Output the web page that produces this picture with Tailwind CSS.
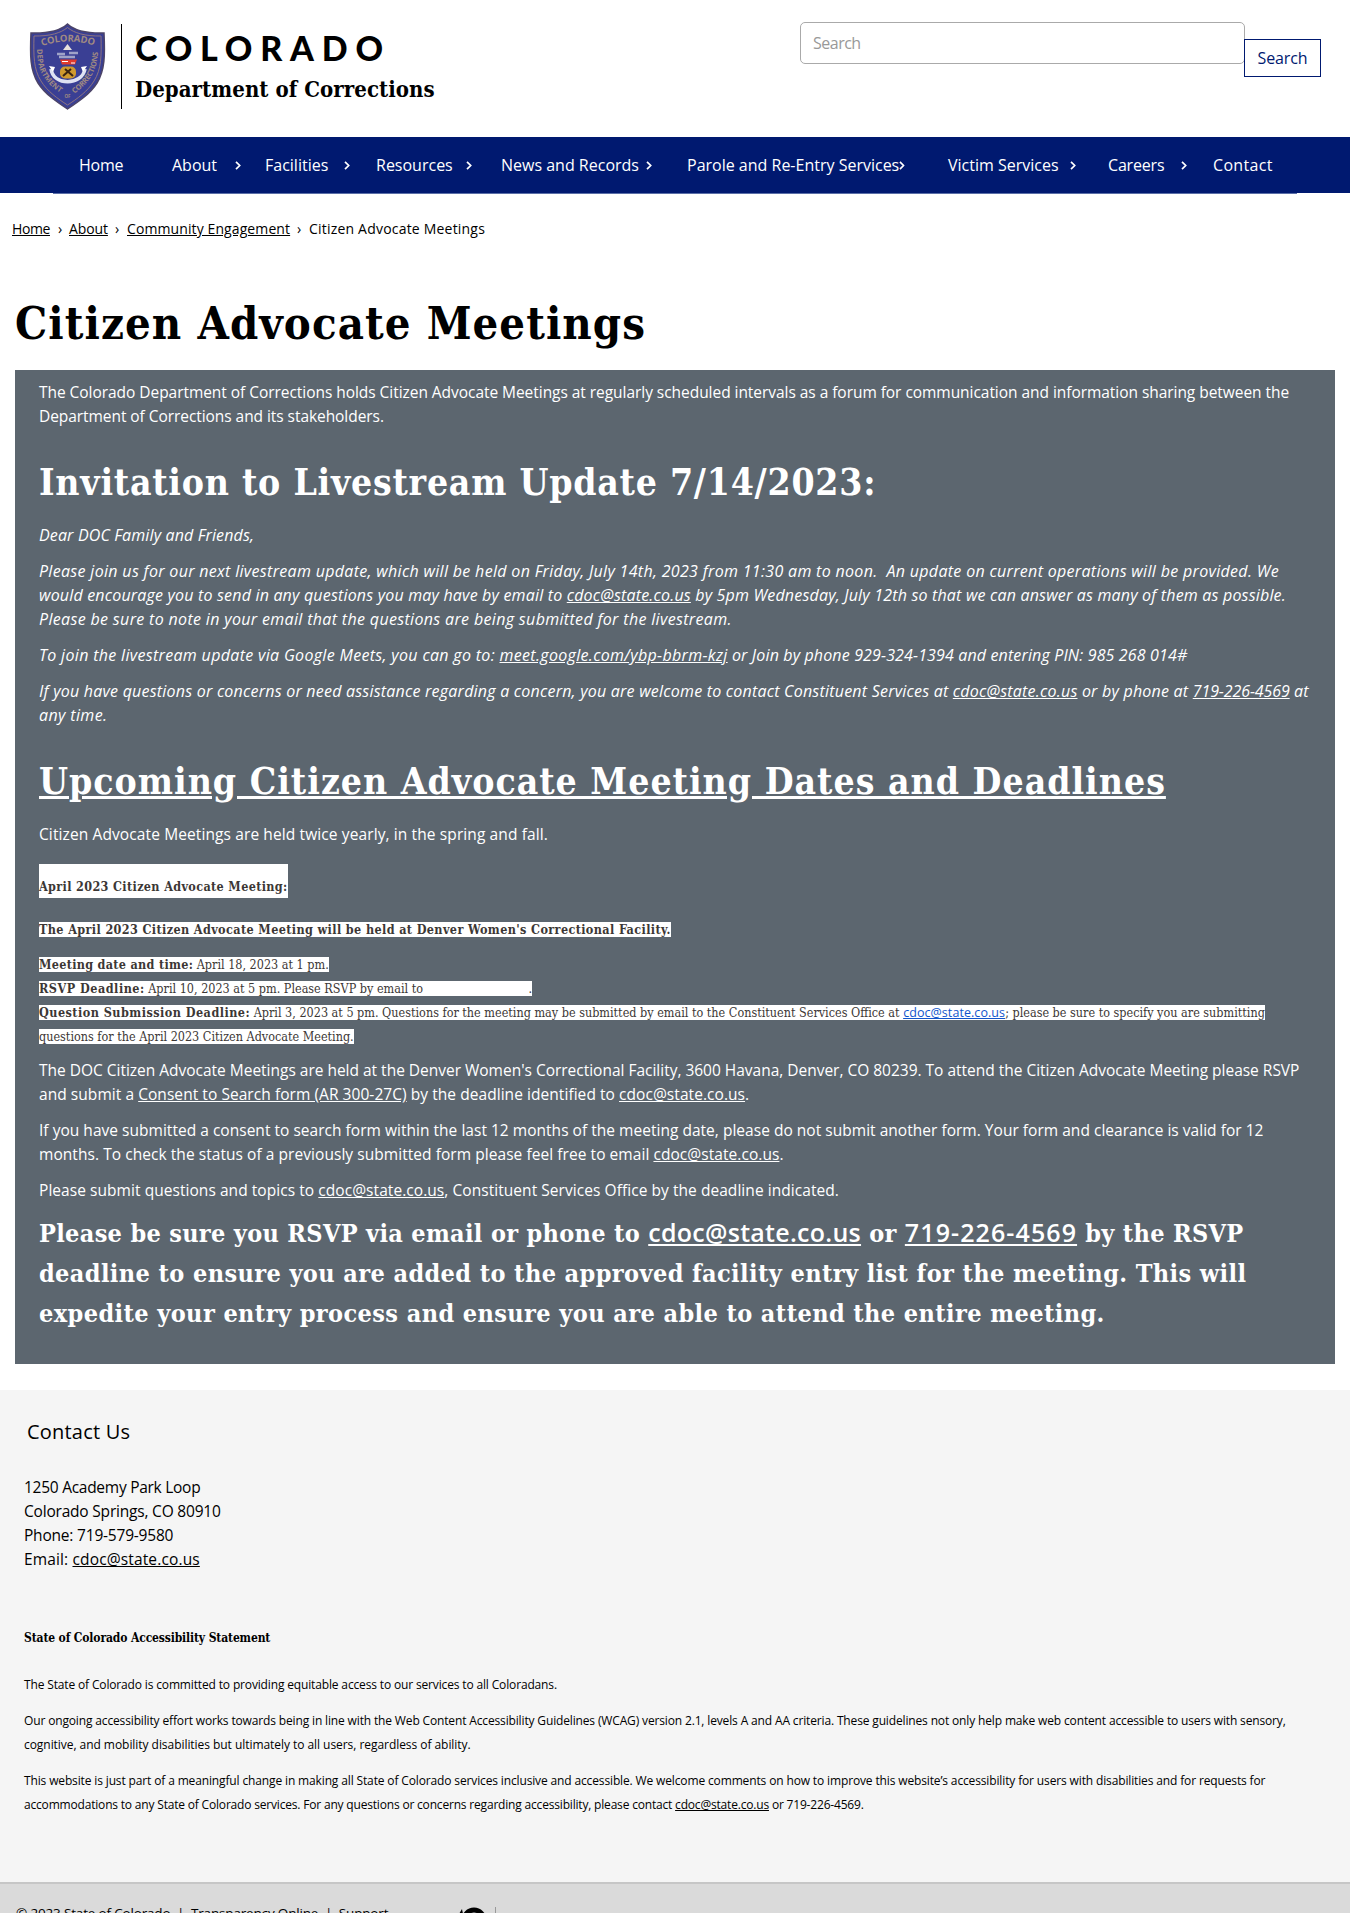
<!DOCTYPE html>
<html lang="en">
<head>
<meta charset="utf-8">
<title>Citizen Advocate Meetings</title>
<script src="https://cdn.jsdelivr.net/npm/@tailwindcss/browser@4"></script>
</head>
<body class="h-[1913px] w-[1350px] overflow-hidden bg-white font-['Open_Sans',sans-serif] text-base leading-6 whitespace-nowrap text-black">

<header class="flex h-[137px] items-start">
  <svg class="mt-[23px] ml-[29px] h-[87px] w-[77px]" viewBox="0 0 77 87">
    <path d="M38.500 1C32 7 20 10.500 2 10C1 32 1 47 9 60C16 71 28 79 38.500 86C49 79 61 71 68 60C76 47 76 32 75 10C57 10.500 45 7 38.500 1Z" fill="#3a3f94" stroke="#4c4468" stroke-width="1.500"/>
    <path d="M38.500 4.500C32 10 21 13.300 5 13C4.500 33 4.500 46 12 58C18 68 29 76 38.500 82C48 76 59 68 65 58C72.500 46 72.500 33 72 13C56 13.300 45 10 38.500 4.500Z" fill="none" stroke="#8d7480" stroke-width="1"/>
    <path id="t" d="M13 23Q38.500 14 66 23" fill="none"/>
    <path id="l" d="M8 26C8 48 15 60 36 73" fill="none"/>
    <path id="r" d="M42 73C61 60 69 48 69 25" fill="none"/>
    <g fill="#a08a82" font-family="Open Sans" font-weight="700">
      <text font-size="9.500"><textPath href="#t" textLength="53">COLORADO</textPath></text>
      <text font-size="7.500"><textPath href="#l" textLength="52">DEPARTMENT</textPath></text>
      <text font-size="7.500"><textPath href="#r" startOffset="4" textLength="50">CORRECTIONS</textPath></text>
      <text x="38.500" y="75" font-size="4.500" text-anchor="middle">OF</text>
    </g>
    <path d="M34 27L38.500 21L43 27Z" fill="#e8e2dc"/>
    <path d="M28 31h8M40 30h9M30 34h16" stroke="#9fa3c8" stroke-width="2.500"/>
    <path d="M31 36.500h17l-2 5h-13z" fill="#e23a2c"/>
    <path d="M33 38.500h6M42 40h4" stroke="#fff" stroke-width="1"/>
    <rect x="31" y="43.500" width="16" height="12" rx="5" fill="#d09a2e"/>
    <path d="M34 53l8-7M44 53l-8-7" stroke="#3a2412" stroke-width="2"/>
    <path d="M22 46C24 63 53 63 56 46" fill="none" stroke="#dfe2f2" stroke-width="3.500"/>
    <path d="M20 43l6 1-2 5zM58 43l-6 1 2 5z" fill="#fff"/>
  </svg>
  <div class="mt-6 ml-[15px] h-[85px] w-px bg-black"></div>
  <div class="mt-7 ml-[13px]">
    <div class="h-10 font-['Lato',sans-serif] text-[34px] leading-10 font-black tracking-[7.8px]">COLORADO</div>
    <div class="mt-[6px] font-['DejaVu_Serif_Condensed','DejaVu_Serif',serif] text-[22px] leading-[30px] font-bold tracking-[0.05px]">Department of Corrections</div>
  </div>
  <div class="ml-auto flex items-start pr-[29px]">
    <div class="mt-[22px] flex h-[42px] w-[445px] items-center rounded-[5px] border border-[#aaa] pl-3 tracking-[-0.5px] text-[#999]">Search</div>
    <div class="mt-[39px] -ml-px flex h-[38px] w-[77px] items-center justify-center border border-[#001970] tracking-[-0.13px] text-[#001970]">Search</div>
  </div>
</header>

<nav class="flex h-14 items-center bg-[#001970] pl-[79px] text-white">
  <span class="w-[93px] tracking-[-0.24px]">Home</span>
  <span class="mr-6 flex w-[69px] items-center justify-between">About<svg class="h-[9px] w-[6px]" viewBox="0 0 6 9"><path d="M1 .8L4.700 4.500L1 8.200" fill="none" stroke="#fff" stroke-width="1.700"/></svg></span>
  <span class="mr-[26px] flex w-[85px] items-center justify-between">Facilities<svg class="h-[9px] w-[6px]" viewBox="0 0 6 9"><path d="M1 .8L4.700 4.500L1 8.200" fill="none" stroke="#fff" stroke-width="1.700"/></svg></span>
  <span class="mr-[29px] flex w-24 items-center justify-between">Resources<svg class="h-[9px] w-[6px]" viewBox="0 0 6 9"><path d="M1 .8L4.700 4.500L1 8.200" fill="none" stroke="#fff" stroke-width="1.700"/></svg></span>
  <span class="mr-[35px] flex w-[151px] items-center justify-between">News and Records<svg class="h-[9px] w-[6px]" viewBox="0 0 6 9"><path d="M1 .8L4.700 4.500L1 8.200" fill="none" stroke="#fff" stroke-width="1.700"/></svg></span>
  <span class="mr-[43px] flex w-[218px] items-center justify-between">Parole and Re-Entry Services<svg class="h-[9px] w-[6px]" viewBox="0 0 6 9"><path d="M1 .8L4.700 4.500L1 8.200" fill="none" stroke="#fff" stroke-width="1.700"/></svg></span>
  <span class="mr-8 flex w-32 items-center justify-between">Victim Services<svg class="h-[9px] w-[6px]" viewBox="0 0 6 9"><path d="M1 .8L4.700 4.500L1 8.200" fill="none" stroke="#fff" stroke-width="1.700"/></svg></span>
  <span class="mr-[26px] flex w-[79px] items-center justify-between tracking-[-0.19px]">Careers<svg class="h-[9px] w-[6px]" viewBox="0 0 6 9"><path d="M1 .8L4.700 4.500L1 8.200" fill="none" stroke="#fff" stroke-width="1.700"/></svg></span>
  <span class="tracking-[0.33px]">Contact</span>
</nav>
<div class="mx-auto h-px w-[1244px] bg-[#5b6fa8]"></div>

<div class="mt-[23px] flex h-6 pl-3 text-sm leading-6">
  <span class="w-[46px]"><a class="tracking-[-0.4px] underline">Home</a></span><span class="w-[11px]">›</span>
  <span class="w-[46px]"><a class="tracking-[-0.1px] underline">About</a></span><span class="w-3">›</span>
  <span class="w-[170px]"><a class="tracking-[0.1px] underline">Community Engagement</a></span><span class="w-3">›</span>
  <span class="tracking-[0.2px]">Citizen Advocate Meetings</span>
</div>

<h1 class="mt-[53px] pl-[15px] font-['DejaVu_Serif_Condensed','DejaVu_Serif',serif] text-[45px] leading-[60px] font-bold tracking-[1.06px]">Citizen Advocate Meetings</h1>

<main class="mx-[15px] mt-4 h-[994px] bg-[#5c666f] pt-[10px] pl-6 text-[15.5px] leading-6 text-white">
  <p class="mb-3">
    <span class="tracking-[-0.046px]">The Colorado Department of Corrections holds Citizen Advocate Meetings at regularly scheduled intervals as a forum for communication and information sharing between the</span><br>
    <span class="tracking-[-0.06px]">Department of Corrections and its stakeholders.</span>
  </p>
  <h2 class="mt-[30px] mb-[17px] font-['DejaVu_Serif_Condensed','DejaVu_Serif',serif] text-[37px] leading-[48px] font-bold tracking-[0.75px]">Invitation to Livestream Update 7/14/2023:</h2>
  <div class="text-base leading-6 italic">
    <p class="mb-3 tracking-[0.14px]">Dear DOC Family and Friends,</p>
    <p class="mb-3">
      <span class="tracking-[0.315px]">Please join us for our next livestream update, which will be held on Friday, July 14th, 2023 from 11:30 am to noon.&nbsp; An update on current operations will be provided. We</span><br>
      <span class="tracking-[0.185px]">would encourage you to send in any questions you may have by email to <a class="underline">cdoc@state.co.us</a> by 5pm Wednesday, July 12th so that we can answer as many of them as possible.</span><br>
      <span class="tracking-[0.335px]">Please be sure to note in your email that the questions are being submitted for the livestream.</span>
    </p>
    <p class="mb-3"><span class="tracking-[0.32px]">To join the livestream update via Google Meets, you can go to: <a class="underline">meet.google.com/ybp-bbrm-kzj</a></span><span class="tracking-[0.14px]"> or Join by phone 929-324-1394 and entering PIN: 985 268 014#</span></p>
    <p>
      <span class="tracking-[0.22px]">If you have questions or concerns or need assistance regarding a concern, you are welcome to contact Constituent Services at <a class="underline">cdoc@state.co.us</a> or by phone at <a class="tracking-[-0.1px] underline">719-226-4569</a> at</span><br>
      <span class="tracking-[0.37px]">any time.</span>
    </p>
  </div>
  <h2 class="mt-[30px] mb-[17px] font-['DejaVu_Serif_Condensed','DejaVu_Serif',serif] text-[37px] leading-[48px] font-bold tracking-[1px] underline">Upcoming Citizen Advocate Meeting Dates and Deadlines</h2>
  <p class="tracking-[0.11px]">Citizen Advocate Meetings are held twice yearly, in the spring and fall.</p>

  <div class="mt-[18px] font-['DejaVu_Serif_Condensed','DejaVu_Serif',serif] text-[12.5px] leading-6 text-[#3c3735]">
    <p class="flex h-[34px] w-[249px] items-end bg-white font-bold tracking-[0.35px]"><span class="leading-[22px]">April 2023 Citizen Advocate Meeting:</span></p>
    <p class="mt-5 font-bold tracking-[0.38px]"><span class="bg-white">The April 2023 Citizen Advocate Meeting will be held at Denver Women's Correctional Facility.</span></p>
    <p class="mt-[11px]">
      <span class="bg-white"><b class="tracking-[0.3px]">Meeting date and time:</b> April 18, 2023 at 1 pm.</span><br>
      <span class="bg-white"><b class="tracking-[0.5px]">RSVP Deadline:</b> April 10, 2023 at 5 pm. Please RSVP by email to <a class="font-['Open_Sans',sans-serif] leading-none tracking-[0.07px] text-white">cdoc@state.co.us</a>.</span><br>
      <span class="bg-white"><b class="tracking-[0.47px]">Question Submission Deadline:</b> April 3, 2023 at 5 pm. Questions for the meeting may be submitted by email to the Constituent Services Office at <a class="font-['Open_Sans',sans-serif] leading-none tracking-[0.07px] text-[#1155cc] underline">cdoc@state.co.us</a>; please be sure to specify you are submitting</span><br>
      <span class="bg-white">questions for the April 2023 Citizen Advocate Meeting.</span>
    </p>
  </div>

  <p class="mt-[9px] mb-3">
    <span class="tracking-[-0.013px]">The DOC Citizen Advocate Meetings are held at the Denver Women's Correctional Facility, 3600 Havana, Denver, CO 80239. To attend the Citizen Advocate Meeting please RSVP</span><br>
    <span class="tracking-[0.055px]">and submit a <a class="underline">Consent to Search form (AR 300-27C)</a> by the deadline identified to <a class="underline">cdoc@state.co.us</a>.</span>
  </p>
  <p class="mb-3">
    <span class="tracking-[0.024px]">If you have submitted a consent to search form within the last 12 months of the meeting date, please do not submit another form. Your form and clearance is valid for 12</span><br>
    <span class="tracking-[0.055px]">months. To check the status of a previously submitted form please feel free to email <a class="underline">cdoc@state.co.us</a>.</span>
  </p>
  <p class="mb-3 tracking-[0.055px]">Please submit questions and topics to <a class="underline">cdoc@state.co.us</a>, Constituent Services Office by the deadline indicated.</p>
  <h3 class="font-['DejaVu_Serif_Condensed','DejaVu_Serif',serif] text-[25px] leading-10 font-bold">
    <span class="tracking-[0.32px]">Please be sure you RSVP via email or phone to <a class="font-['Open_Sans',sans-serif] leading-none font-semibold tracking-[0.28px] underline">cdoc@state.co.us</a> or <a class="font-['Open_Sans',sans-serif] leading-none font-semibold tracking-[1.1px] underline">719-226-4569</a> by the RSVP</span><br>
    <span class="tracking-[0.4px]">deadline to ensure you are added to the approved facility entry list for the meeting. This will</span><br>
    <span class="tracking-[0.41px]">expedite your entry process and ensure you are able to attend the entire meeting.</span>
  </h3>
</main>

<footer class="mt-[26px] h-[492px] bg-[#f5f5f5] pt-[27px] pl-6">
  <div class="pl-[3px] text-xl leading-[30px] tracking-[0.2px]">Contact Us</div>
  <address class="mt-7 text-[15.5px] leading-6 not-italic">
    <span class="tracking-[-0.27px]">1250 Academy Park Loop</span><br>
    <span class="tracking-[-0.2px]">Colorado Springs, CO 80910</span><br>
    <span class="tracking-[-0.2px]">Phone: 719-579-9580</span><br>
    <span class="tracking-[0.14px]">Email: <a class="underline">cdoc@state.co.us</a></span>
  </address>
  <div class="mt-[55px] font-['DejaVu_Serif_Condensed','DejaVu_Serif',serif] text-xs leading-6 font-bold tracking-[-0.13px]">State of Colorado Accessibility Statement</div>
  <div class="mt-[23px] space-y-3 text-xs leading-6">
    <p class="tracking-[-0.15px]">The State of Colorado is committed to providing equitable access to our services to all Coloradans.</p>
    <p>
      <span class="tracking-[-0.147px]">Our ongoing accessibility effort works towards being in line with the Web Content Accessibility Guidelines (WCAG) version 2.1, levels A and AA criteria. These guidelines not only help make web content accessible to users with sensory,</span><br>
      <span class="tracking-[-0.05px]">cognitive, and mobility disabilities but ultimately to all users, regardless of ability.</span>
    </p>
    <p>
      <span class="tracking-[-0.138px]">This website is just part of a meaningful change in making all State of Colorado services inclusive and accessible. We welcome comments on how to improve this website’s accessibility for users with disabilities and for requests for</span><br>
      <span class="tracking-[-0.185px]">accommodations to any State of Colorado services. For any questions or concerns regarding accessibility, please contact <a class="underline">cdoc@state.co.us</a> or 719-226-4569.</span>
    </p>
  </div>
</footer>

<div class="flex h-[60px] items-start border-t-2 border-[#c6c6c6] bg-[#dadada] pt-[19px] pl-4 text-[13.5px] leading-5">
  <span class="w-[372px] tracking-[-0.17px]">© 2023 State of Colorado &nbsp;|&nbsp; Transparency Online &nbsp;|&nbsp; Support</span>
  <svg class="mt-1 ml-[68px] h-[30px] w-[42px]" viewBox="0 0 42 30"><path d="M0 12L6 2L8 12Z"/><circle cx="18" cy="13" r="10" fill="none" stroke="#000" stroke-width="5"/><path d="M39.500 0v30" stroke="#999"/></svg>
</div>
</body>
</html>
